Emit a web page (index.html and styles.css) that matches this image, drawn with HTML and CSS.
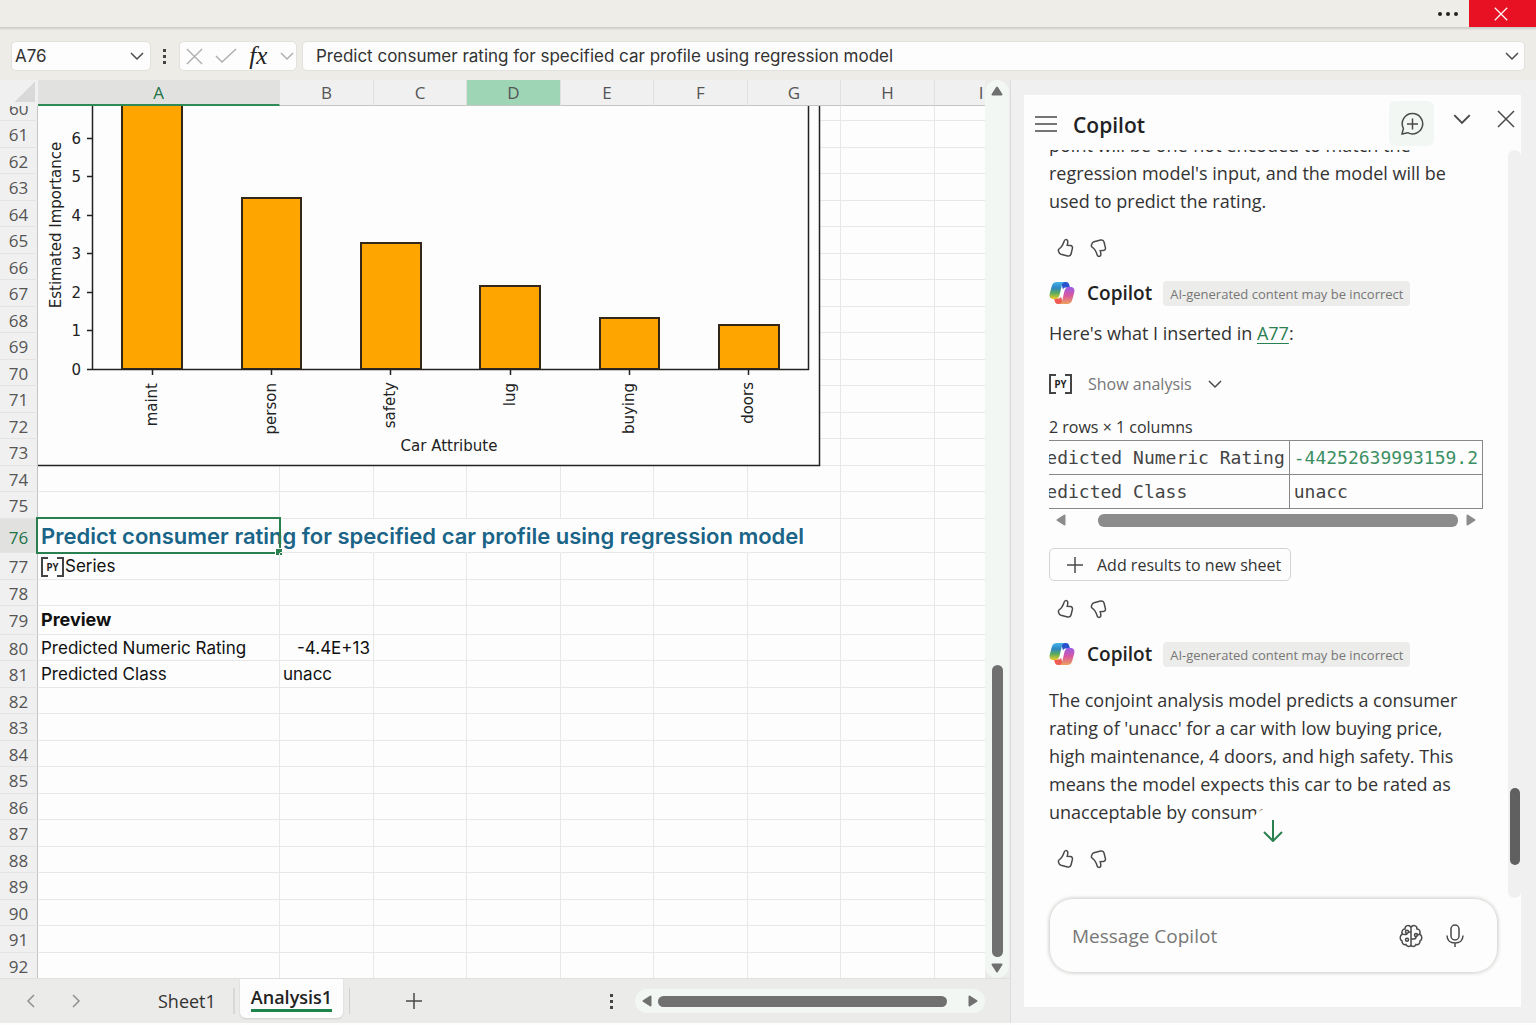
FILE: index.html
```html
<!DOCTYPE html>
<html lang="en">
<head>
  <meta charset="UTF-8">
  <meta name="viewport" content="width=device-width, initial-scale=1.0">
  <title>Analysis1</title>
  <link rel="stylesheet" href="styles.css">
</head>
<body>
  <!-- Shared icons -->
  <svg class="defs" width="0" height="0" aria-hidden="true">
    <defs>
      <linearGradient id="cool" x1="0" y1="0" x2="0" y2="1">
        <stop offset="0" stop-color="#45b4e6"/>
        <stop offset="0.35" stop-color="#2f87c4"/>
        <stop offset="0.65" stop-color="#5bab5c"/>
        <stop offset="1" stop-color="#f0cb2c"/>
      </linearGradient>
      <linearGradient id="warm" x1="0" y1="0" x2="0" y2="1">
        <stop offset="0" stop-color="#9a5be8"/>
        <stop offset="0.5" stop-color="#d8599f"/>
        <stop offset="1" stop-color="#eca25c"/>
      </linearGradient>
    </defs>
    <symbol id="logo" viewBox="0 0 26 24">
      <path fill="#2a52cc" d="M12 1h5c2 0 2.800 1.200 3.300 3l.7 2.500h-4c-1.500 0-2.500.6-3 2z"/>
      <path fill="#ee5d54" d="M14 23H9c-2 0-2.800-1.200-3.300-3L5 17.500h4c1.500 0 2.500-.6 3-2z"/>
      <path fill="url(#cool)" d="M8 1h8.500c-2 0-3 1-3.600 3l-2.100 9c-.7 3-1.800 5-4.300 5h-2C1 18 0 15.500.8 12.500l2-7.500C3.500 2.500 5 1 8 1z"/>
      <path fill="url(#warm)" d="M18 23H9.500c2 0 3-1 3.600-3l2.100-9c.7-3 1.800-5 4.300-5h2c3.500 0 4.500 2.500 3.700 5.500l-2 7.500c-.7 2.500-2.200 4-5.200 4z"/>
    </symbol>
    <symbol id="thumb" viewBox="0 0 20 20">
      <path d="M10.600 1.600c.9-.3 2.100.3 2.200 1.800.1 1.200-.2 2.600-.6 4l3.200.2c1.500.1 2.400 1.400 2 2.800l-1.300 5.400c-.4 1.600-1.900 2.500-3.500 2.100l-6.600-1.700c-1-.3-1.800-1-2.100-2l-.5-1.400c-.2-.9.2-1.800 1-2.200 2.600-1.500 3.600-3.800 4.800-7.600.2-.7.700-1.200 1.400-1.400z"/>
    </symbol>
    <symbol id="chevron" viewBox="0 0 14 14"><path d="M1 4l6 6 6-6"/></symbol>
    <symbol id="cross" viewBox="0 0 18 18"><path d="M1 1l16 16M17 1L1 17"/></symbol>
    <symbol id="plus" viewBox="0 0 16 16"><path d="M8 0v16M0 8h16"/></symbol>
    <symbol id="arrow" viewBox="0 0 12 12"><path d="M6 2.500l4.500 7h-9z"/></symbol>
  </svg>

  <!-- Title bar -->
  <header class="titlebar">
    <button class="more" type="button" aria-label="More"><i></i><i></i><i></i></button>
    <button class="close-window" type="button" aria-label="Close window"><svg class="icon s14"><use href="#cross"/></svg></button>
  </header>

  <!-- Formula bar -->
  <div class="formula-bar">
    <div class="box name-box">
      <input type="text" id="cellName" aria-label="Name box" value="A76">
      <button type="button" aria-label="Name list"><svg class="icon s14"><use href="#chevron"/></svg></button>
    </div>
    <span class="dots"><i></i><i></i><i></i></span>
    <div class="box fx-box">
      <button type="button" aria-label="Cancel"><svg class="icon s17 pale"><use href="#cross"/></svg></button>
      <button type="button" aria-label="Enter"><svg class="icon pale" width="22" height="16" viewBox="0 0 22 16"><path d="M1 8l6 6L21 1"/></svg></button>
      <button type="button" class="fx" aria-label="Insert function">fx</button>
      <button type="button" aria-label="Function list"><svg class="icon s14 pale"><use href="#chevron"/></svg></button>
    </div>
    <div class="box formula-box">
      <input type="text" id="formula" aria-label="Formula" value="Predict consumer rating for specified car profile using regression model">
      <button type="button" aria-label="Expand"><svg class="icon s14"><use href="#chevron"/></svg></button>
    </div>
  </div>

  <div class="workspace">
    <main class="book">
      <div class="sheet-area">
        <div class="sheet">
          <table id="grid">
            <colgroup>
              <col class="c-num"><col class="c-a"><col class="c-wide"><col class="c-slim"><col class="c-wide">
              <col class="c-slim"><col class="c-wide"><col class="c-slim"><col class="c-wide"><col class="c-slim">
            </colgroup>
            <thead>
              <tr>
                <th class="corner"></th>
                <th class="active">A</th><th>B</th><th>C</th><th class="hover">D</th><th>E</th><th>F</th><th>G</th><th>H</th><th>I</th>
              </tr>
            </thead>
            <tbody></tbody>
          </table>

          <!-- Chart floating over the cells -->
          <svg class="chart" width="783" height="361" viewBox="0 0 783 361">
            <rect class="paper" x="0" y="0" width="782" height="360"/>
            <g class="bars">
              <rect x="84" y="-10" width="60" height="273"/>
              <rect x="204" y="92" width="59" height="171"/>
              <rect x="323" y="137" width="60" height="126"/>
              <rect x="442" y="180" width="60" height="83"/>
              <rect x="562" y="212" width="59" height="51"/>
              <rect x="681" y="219" width="60" height="44"/>
            </g>
            <path class="axis" d="M54.500 0v263.500H770.500V0M49 32.500h5M49 70.500h5M49 109.500h5M49 147.500h5M49 186.500h5M49 224.500h5M49 263.500h5M114.500 263v6M233.500 263v6M352.500 263v6M472.500 263v6M591.500 263v6M710.500 263v6"/>
            <g text-anchor="end">
              <text x="43" y="38">6</text><text x="43" y="76">5</text><text x="43" y="115">4</text>
              <text x="43" y="153">3</text><text x="43" y="192">2</text><text x="43" y="230">1</text><text x="43" y="269">0</text>
              <text transform="translate(119 277) rotate(-90)">maint</text>
              <text transform="translate(238 277) rotate(-90)">person</text>
              <text transform="translate(357 276) rotate(-90)">safety</text>
              <text transform="translate(477 277) rotate(-90)">lug</text>
              <text transform="translate(596 277) rotate(-90)">buying</text>
              <text transform="translate(715 276) rotate(-90)">doors</text>
            </g>
            <text text-anchor="middle" transform="translate(23 119) rotate(-90)">Estimated Importance</text>
            <text text-anchor="middle" x="411" y="345">Car Attribute</text>
            <path class="frame" d="M781.500 0V359.500H0"/>
          </svg>
        </div>
        <div class="vscroll">
          <svg class="tri s12"><use href="#arrow"/></svg>
          <span class="track"><span class="thumb"></span></span>
          <svg class="tri s12 down"><use href="#arrow"/></svg>
        </div>
      </div>

      <!-- Sheet tabs -->
      <nav class="tabs">
        <button type="button" class="nav" aria-label="Previous sheet"><svg class="icon s14 left"><use href="#chevron"/></svg></button>
        <button type="button" class="nav" aria-label="Next sheet"><svg class="icon s14 right"><use href="#chevron"/></svg></button>
        <button type="button" class="tab">Sheet1</button>
        <button type="button" class="tab current"><span>Analysis1</span></button>
        <button type="button" class="add-sheet" aria-label="New sheet"><svg class="icon s16"><use href="#plus"/></svg></button>
        <span class="dots"><i></i><i></i><i></i></span>
        <div class="hscroll">
          <svg class="tri s12 left"><use href="#arrow"/></svg>
          <span class="track"><span class="thumb"></span></span>
          <svg class="tri s12 right"><use href="#arrow"/></svg>
        </div>
      </nav>
    </main>

    <!-- Copilot pane -->
    <aside class="pane">
      <header class="pane-head">
        <button type="button" aria-label="Menu"><svg class="icon" width="22" height="16" viewBox="0 0 22 16"><path d="M0 1h22M0 8h22M0 15h22"/></svg></button>
        <h1>Copilot</h1>
        <button type="button" class="new-chat" aria-label="New chat">
          <svg class="icon" width="24" height="24" viewBox="0 0 24 24"><path d="M12.500 1.500a10.200 10.200 0 1 1-4.800 19.200L2 22l1.400-5.600A10.200 10.200 0 0 1 12.500 1.500zM12.500 6.500v11M7 12h11"/></svg>
        </button>
        <button type="button" class="fold" aria-label="Options"><svg class="icon s18"><use href="#chevron"/></svg></button>
        <button type="button" class="close-pane" aria-label="Close pane"><svg class="icon s18"><use href="#cross"/></svg></button>
      </header>

      <div class="chat-wrap">
        <div class="chat">
          <p>point will be one-hot encoded to match the<br>regression model's input, and the model will be<br>used to predict the rating.</p>
          <div class="rate">
            <button type="button" aria-label="Like"><svg class="icon s20"><use href="#thumb"/></svg></button>
            <button type="button" aria-label="Dislike"><svg class="icon s20 flip"><use href="#thumb"/></svg></button>
          </div>

          <div class="sender"><svg width="26" height="24"><use href="#logo"/></svg><h2>Copilot</h2><span class="badge">AI-generated content may be incorrect</span></div>
          <p class="inserted">Here's what I inserted in <a href="#A77">A77</a>:</p>
          <button type="button" class="show"><span class="py">PY</span>Show analysis<svg class="icon s14"><use href="#chevron"/></svg></button>
          <div class="result">
            <div class="shape">2 rows × 1 columns</div>
            <div class="table-clip">
              <table>
                <tr><th>Predicted Numeric Rating</th><td class="num">-44252639993159.2</td></tr>
                <tr><th>Predicted Class</th><td>unacc</td></tr>
              </table>
            </div>
            <div class="table-scroll">
              <svg class="tri s12 left"><use href="#arrow"/></svg>
              <span class="track"><span class="thumb"></span></span>
              <svg class="tri s12 right"><use href="#arrow"/></svg>
            </div>
          </div>
          <button type="button" class="add-results"><svg class="icon s16"><use href="#plus"/></svg>Add results to new sheet</button>
          <div class="rate">
            <button type="button" aria-label="Like"><svg class="icon s20"><use href="#thumb"/></svg></button>
            <button type="button" aria-label="Dislike"><svg class="icon s20 flip"><use href="#thumb"/></svg></button>
          </div>

          <div class="sender"><svg width="26" height="24"><use href="#logo"/></svg><h2>Copilot</h2><span class="badge">AI-generated content may be incorrect</span></div>
          <p class="answer">The conjoint analysis model predicts a consumer<br>rating of 'unacc' for a car with low buying price,<br>high maintenance, 4 doors, and high safety. This<br>means the model expects this car to be rated as<br>unacceptable by consumers.</p>
          <div class="rate">
            <button type="button" aria-label="Like"><svg class="icon s20"><use href="#thumb"/></svg></button>
            <button type="button" aria-label="Dislike"><svg class="icon s20 flip"><use href="#thumb"/></svg></button>
          </div>
          <button type="button" class="jump" aria-label="Scroll to bottom"><svg class="icon" width="20" height="22" viewBox="0 0 20 22"><path d="M10 0v21M1 12l9 9 9-9"/></svg></button>
        </div>
        <div class="chat-scroll"><span class="thumb"></span></div>
      </div>

      <form class="composer">
        <input type="text" id="message" aria-label="Message Copilot" placeholder="Message Copilot">
        <button type="button" aria-label="Think deeper">
          <svg class="icon" width="24" height="24" viewBox="0 0 24 24"><path d="M12 3v18M12 3.500C10.500.500 6 1 6 5 3.500 5 2 8 3.500 10 .5 11.500.5 15.500 3 17c0 3 2 4 4 3.500 1 2.500 4.500 2.500 5 .5M12 3.500C13.500.500 18 1 18 5c2.500 0 4 3 2.500 5 3 1.500 3 5.500.5 7 0 3-2 4-4 3.500-1 2.500-4.500 2.500-5 .5M3.500 10C5 11 7 10.500 8.500 9.800M12 8H9.500M12 15h3c1.500 0 2-1 2-2.500M20.500 10c-1 1-2 1.200-3 1"/><circle cx="8" cy="7.800" r="1.500"/><circle cx="8" cy="15.800" r="1.500"/><circle cx="17" cy="11" r="1.500"/></svg>
        </button>
        <button type="button" aria-label="Dictate">
          <svg class="icon" width="18" height="24" viewBox="0 0 18 24"><rect x="5" y="1" width="8" height="15" rx="4"/><path d="M1 11.500C1 16.500 4.500 19 9 19s8-2.500 8-7.500M9 19v4"/></svg>
        </button>
      </form>
    </aside>
  </div>

  <script>
    // Cells that hold something, by row
    const cells = {
      76: { A: '<span class="title">Predict consumer rating for specified car profile using regression model</span><span class="cursor"></span>' },
      77: { A: '<span class="py">PY</span>Series' },
      79: { A: '<b>Preview</b>' },
      80: { A: 'Predicted Numeric Rating', B: '-4.4E+13' },
      81: { A: 'Predicted Class', B: 'unacc' }
    };

    let html = "";
    for (let row = 60; row <= 92; row++) {
      html += `<tr class="r${row}"><th><div>${row}</div></th>`;
      for (const col of "ABCDEFGHI") {
        const text = (cells[row] && cells[row][col]) || "";
        html += `<td class="${text.startsWith("-") ? "number" : ""}">${text}</td>`;
      }
      html += "</tr>";
    }
    document.querySelector("#grid tbody").innerHTML = html;
  </script>
</body>
</html>
```
FILE: styles.css
```css
* {
  box-sizing: border-box;
}
body {
  margin: 0;
  height: 100vh;
  padding-bottom: 2px;
  display: flex;
  flex-direction: column;
  overflow: hidden;
  background: #fdfdfd;
  color: #333;
  font-family: "Open Sans", "Noto Sans", sans-serif;
  font-size: 18px;
}
button, input {
  font: inherit;
  color: inherit;
  border: none;
  background: none;
  padding: 0;
  margin: 0;
  min-width: 0;
  outline: none;
}
button {
  display: flex;
  align-items: center;
  justify-content: center;
  cursor: pointer;
}
h1, h2, p {
  margin: 0;
}
.defs {
  position: absolute;
}

/* Icons */
.icon {
  fill: none;
  stroke: #4a4a4a;
  stroke-width: 1.5;
  flex: none;
}
.tri {
  fill: #707070;
  stroke: #707070;
  stroke-width: 2;
  stroke-linejoin: round;
  flex: none;
}
.pale { stroke: #b0b0b0; }
.s12 { width: 12px; height: 12px; }
.s14 { width: 14px; height: 14px; }
.s16 { width: 16px; height: 16px; }
.s17 { width: 17px; height: 17px; }
.s18 { width: 18px; height: 18px; }
.s20 { width: 20px; height: 20px; }
.flip { transform: scaleY(-1); }
.down { transform: rotate(180deg); }
.tri.left { transform: rotate(-90deg); }
.tri.right { transform: rotate(90deg); }
.icon.left { transform: rotate(90deg); }
.icon.right { transform: rotate(-90deg); }
.dots {
  display: flex;
  flex-direction: column;
  gap: 3px;
}
.dots i {
  width: 3px;
  height: 3px;
  background: #444;
}
.py {
  display: inline-flex;
  align-items: center;
  justify-content: center;
  position: relative;
  width: 23px;
  height: 20px;
  font: bold 10px "DejaVu Sans Mono", monospace;
  color: #222;
}
.py::before, .py::after {
  content: "";
  position: absolute;
  top: 0;
  bottom: 0;
  width: 5px;
  border: 2px solid #444;
}
.py::before {
  left: 0;
  border-right: none;
}
.py::after {
  right: 0;
  border-left: none;
}

/* Title bar */
.titlebar {
  height: 28px;
  flex: none;
  display: flex;
  justify-content: flex-end;
  position: relative;
  background: #eeede8;
  border-bottom: 1px solid #ccceca;
  box-shadow: 0 1px 2px #ccceca;
}
.more {
  gap: 4px;
  padding: 0 11px;
}
.more i {
  width: 4px;
  height: 4px;
  border-radius: 50%;
  background: #222;
}
.close-window {
  width: 67px;
  padding-right: 3px;
  background: #e81123;
}
.close-window .icon {
  stroke: #fff;
}

/* Formula bar */
.formula-bar {
  height: 52px;
  flex: none;
  display: flex;
  align-items: center;
  padding: 4px 11px 0;
  background: #edece7;
  font-family: Inter, sans-serif;
  font-size: 17px;
}
.box {
  display: flex;
  align-items: center;
  height: 30px;
  background: #fdfdfd;
  border: 1px solid #e2e1dd;
  border-radius: 5px;
}
.name-box {
  width: 140px;
  padding: 0 6px 0 3px;
}
.name-box input, .formula-box input {
  flex: 1;
}
.formula-bar .dots {
  margin: 0 13px 0 12px;
}
.fx-box {
  width: 118px;
  padding: 0 3px 0 7px;
  gap: 14px;
  margin-right: 5px;
}
.fx {
  font: italic 25px/26px "Liberation Serif", serif;
  color: #222;
}
.fx + button {
  margin-left: auto;
}
.formula-box {
  flex: 1;
  padding: 0 5px 0 13px;
}

/* Workspace */
.workspace {
  flex: 1;
  min-height: 0;
  display: flex;
  background: #f0f0f0;
}
.book {
  flex: 1;
  min-width: 0;
  display: flex;
  flex-direction: column;
  background: #ebebe9;
  border-right: 1px solid #dcdcda;
}
.sheet-area {
  flex: 1;
  min-height: 0;
  display: flex;
}
.sheet {
  flex: 1;
  position: relative;
  overflow: hidden;
  background: #fdfdfd;
}

/* Grid */
#grid {
  width: 1028px;
  table-layout: fixed;
  border-collapse: separate;
  border-spacing: 0;
  font-family: Inter, sans-serif;
  font-size: 17px;
  color: #111;
}
.c-num { width: 38px; }
.c-a { width: 242px; }
.c-wide { width: 94px; }
.c-slim { width: 93px; }
#grid th {
  padding: 1px 0 0;
  background: #f0f0f0;
  border-right: 1px solid #e0e0e0;
  border-bottom: 1px solid #c4c4c4;
  font: 17px/22px "Open Sans", sans-serif;
  color: #555;
}
#grid thead th {
  height: 26px;
}
#grid thead .active {
  background: #e1e1df;
  border-bottom: 2px solid #2f8a55;
  color: #217346;
}
#grid thead .hover {
  background: #9ed5b5;
}
#grid thead .corner {
  border: none;
  background: linear-gradient(135deg, transparent 50%, #d9d9d9 50%) 14px 2px / 21px 20px no-repeat #f0f0f0;
}
#grid tbody tr {
  height: 26px;
}
#grid tbody tr:nth-child(even) {
  height: 27px;
}
#grid tbody th {
  padding-top: 2px;
  border-right-color: #c4c4c4;
  border-bottom-color: #e4e4e4;
}
#grid td {
  position: relative;
  padding: 0 3px;
  border-right: 1px solid #e8e8e8;
  border-bottom: 1px solid #e8e8e8;
  line-height: 24px;
  white-space: nowrap;
}
#grid td b {
  font-size: 18px;
}
#grid td .py {
  vertical-align: middle;
  margin-right: 1px;
}
#grid td.number {
  text-align: right;
}
#grid tbody tr.r60 {
  height: 15px;
}
#grid .r60 th {
  padding: 0;
}
.r60 th div {
  display: flex;
  align-items: flex-end;
  height: 14px;
  padding-left: 9px;
  overflow: hidden;
}
#grid tbody tr.r76 {
  height: 34px;
}
#grid .r76 th {
  padding-top: 5px;
  background: #e1e1df;
  color: #217346;
}
#grid .r76 td {
  padding-top: 2px;
}
#grid .r76 td:nth-child(-n+7) {
  border-right-color: transparent;
}
#grid tbody tr.r79 {
  height: 29px;
}
.title {
  font-size: 22px;
  font-weight: 600;
  color: #1a6487;
}
.cursor {
  position: absolute;
  top: -2px;
  right: -2px;
  bottom: -2px;
  left: -2px;
  border: 2px solid #2a7f4f;
}
.cursor::after {
  content: "";
  position: absolute;
  right: -3px;
  bottom: -3px;
  width: 6px;
  height: 6px;
  background: #2a7f4f;
  border-top: 1px solid #fff;
  border-left: 1px solid #fff;
}

/* Chart */
.chart {
  position: absolute;
  left: 38px;
  top: 26px;
  font-family: "DejaVu Sans", sans-serif;
  font-size: 15px;
  fill: #222;
}
.paper { fill: #fdfdfd; }
.bars {
  fill: #ffa500;
  stroke: #33271a;
  stroke-width: 2;
}
.axis, .frame {
  fill: none;
  stroke: #222;
  stroke-width: 1.5;
}

/* Scroll bars */
.vscroll {
  width: 24px;
  margin-right: 1px;
  display: flex;
  flex-direction: column;
  align-items: center;
  padding: 5px 0 4px;
  background: #f3f7f4;
  border-radius: 12px;
}
.vscroll .track {
  flex: 1;
  display: flex;
  flex-direction: column;
  justify-content: flex-end;
  padding-bottom: 5px;
}
.track .thumb {
  background: #707070;
  border-radius: 6px;
}
.vscroll .thumb {
  width: 11px;
  height: 34%;
}
.hscroll, .table-scroll {
  display: flex;
  align-items: center;
}
.hscroll .track, .table-scroll .track {
  flex: 1;
  display: flex;
}

/* Sheet tabs */
.tabs {
  height: 45px;
  flex: none;
  display: flex;
  align-items: center;
  padding: 0 25px 0 24px;
  border-top: 1px solid #e0e0de;
}
.nav {
  width: 14px;
  margin-right: 31px;
}
.nav .icon {
  stroke: #909090;
}
.tab {
  height: 26px;
  padding: 0 17px;
  margin-left: 20px;
  border-right: 2px solid #d8d8d6;
}
.nav + .tab {
  margin-left: 58px;
}
.tabs .nav:nth-child(2) {
  margin-right: 0;
}
.tabs .tab.current {
  align-self: flex-start;
  height: 39px;
  margin: 0 0 0 5px;
  padding: 0 11px;
  border: none;
  background: #fdfdfd;
  border-radius: 0 0 6px 6px;
  box-shadow: 0 1px 2px #cfcfcd;
  font-weight: 600;
  color: #222;
}
.tab.current span {
  border-bottom: 3px solid #1e8449;
}
.add-sheet {
  height: 26px;
  margin-left: 6px;
  padding-left: 56px;
  border-left: 1px solid #d0d0ce;
}
.tabs .dots {
  margin-left: auto;
}
.hscroll {
  width: 350px;
  height: 24px;
  margin-left: 22px;
  padding: 0 6px;
  background: #f3f7f4;
  border-radius: 12px;
}
.hscroll .track {
  padding: 0 20px 0 5px;
}
.hscroll .thumb {
  flex: 1;
  height: 11px;
}

/* Copilot pane */
.pane {
  width: 497px;
  flex: none;
  display: flex;
  flex-direction: column;
  margin: 15px 15px 16px 13px;
  background: #fdfdfd;
}
.pane-head {
  height: 55px;
  flex: none;
  display: flex;
  align-items: center;
  padding: 2px 6px 0 11px;
}
.pane-head h1 {
  flex: 1;
  margin-left: 16px;
  font-size: 21px;
  font-weight: 600;
  line-height: 28px;
  padding-top: 3px;
  color: #222;
}
.new-chat {
  width: 45px;
  height: 45px;
  border-radius: 6px;
  background: #f3f7f4;
}
.fold {
  width: 56px;
}
.close-pane {
  width: 18px;
  margin-left: 7px;
}
.fold, .close-pane {
  padding-bottom: 9px;
}
.chat-wrap {
  flex: 1;
  min-height: 0;
  display: flex;
}
.chat {
  flex: 1;
  position: relative;
  display: flex;
  flex-direction: column;
  justify-content: flex-end;
  align-items: flex-start;
  overflow: hidden;
  padding: 0 25px 27px;
  line-height: 28px;
}
.chat > * {
  flex: none;
}
.chat p {
  white-space: nowrap;
}
.rate {
  display: flex;
  gap: 13px;
  height: 24px;
  margin: 21px 0 0 6px;
}
.add-results + .rate {
  margin-top: 16px;
}
.sender {
  display: flex;
  align-items: center;
  height: 28px;
  margin-top: 19px;
}
.sender h2 {
  margin: 0 11px 0 12px;
  font-size: 19px;
  font-weight: 600;
  color: #222;
}
.badge {
  padding: 2px 7px 0;
  background: #ececea;
  border-radius: 4px;
  font-size: 13px;
  line-height: 23px;
  color: #777;
}
.inserted {
  margin-top: 12px;
}
.inserted a {
  color: #2a8050;
  text-underline-offset: 3px;
}
.show {
  gap: 16px;
  height: 28px;
  margin-top: 23px;
  font-size: 16px;
  color: #777;
}
.result {
  width: 434px;
  margin-top: 17px;
}
.shape {
  font-size: 16px;
  line-height: 25px;
}
.table-clip {
  display: flex;
  justify-content: flex-end;
  overflow: hidden;
}
.table-clip table {
  flex: none;
  border-collapse: collapse;
  font: 18px/28px "DejaVu Sans Mono", monospace;
  color: #444;
}
.table-clip th, .table-clip td {
  padding: 3px 4px 2px;
  border: 1px solid #888;
  font-weight: normal;
  text-align: left;
}
.table-clip .num {
  color: #3c8f63;
}
.table-scroll {
  height: 22px;
  padding: 0 6px;
}
.table-scroll .tri {
  fill: #8c8c8c;
  stroke: #8c8c8c;
}
.table-scroll .track {
  padding: 0 7px 0 31px;
}
.table-scroll .thumb {
  flex: 1;
  height: 13px;
  background: #8c8c8c;
}
.add-results {
  gap: 14px;
  height: 33px;
  margin-top: 17px;
  padding: 0 9px 0 17px;
  border: 1px solid #d4d4d4;
  border-radius: 5px;
  font-size: 16px;
}
.answer {
  margin-top: 18px;
}
.jump {
  position: absolute;
  left: 225px;
  bottom: 43px;
  width: 48px;
  height: 48px;
  border-radius: 50%;
  background: #fdfdfd;
}
.jump .icon {
  stroke: #2a8050;
  stroke-width: 2;
}
.chat-scroll {
  width: 13px;
  display: flex;
  flex-direction: column;
  justify-content: flex-end;
  align-items: center;
  padding-bottom: 33px;
  background: #f0f0f0;
  border-radius: 7px;
}
.chat-scroll .thumb {
  width: 10px;
  height: 77px;
  border-radius: 5px;
  background: #606060;
}
.composer {
  height: 75px;
  flex: none;
  display: flex;
  align-items: center;
  gap: 23px;
  margin: 0 23px 34px 25px;
  padding: 0 33px 0 22px;
  border: 1px solid #dededc;
  border-radius: 24px;
  box-shadow: 0 0 3px 1px #dededc;
}
.composer input {
  flex: 1;
  font-size: 19px;
}
.composer input::placeholder {
  color: #777;
  opacity: 1;
}
```
